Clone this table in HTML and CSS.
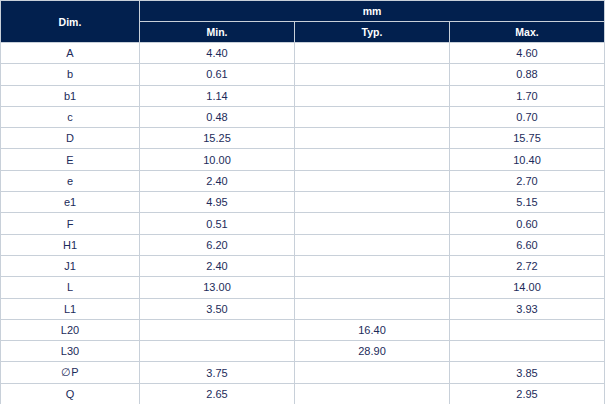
FILE: index.html
```html
<!DOCTYPE html>
<html>
<head>
<meta charset="utf-8">
<link rel="stylesheet" href="styles.css">
</head>
<body>
<table class="dims">
  <colgroup>
    <col class="c-dim"><col class="c-val"><col class="c-val"><col class="c-val">
  </colgroup>
  <thead>
    <tr class="hrow"><th rowspan="2" class="h">Dim.</th><th colspan="3" class="h">mm</th></tr>
    <tr class="hrow"><th class="h">Min.</th><th class="h">Typ.</th><th class="h">Max.</th></tr>
  </thead>
  <tbody>
    <tr><td>A</td><td>4.40</td><td></td><td>4.60</td></tr>
    <tr><td>b</td><td>0.61</td><td></td><td>0.88</td></tr>
    <tr><td>b1</td><td>1.14</td><td></td><td>1.70</td></tr>
    <tr><td>c</td><td>0.48</td><td></td><td>0.70</td></tr>
    <tr><td>D</td><td>15.25</td><td></td><td>15.75</td></tr>
    <tr><td>E</td><td>10.00</td><td></td><td>10.40</td></tr>
    <tr><td>e</td><td>2.40</td><td></td><td>2.70</td></tr>
    <tr><td>e1</td><td>4.95</td><td></td><td>5.15</td></tr>
    <tr><td>F</td><td>0.51</td><td></td><td>0.60</td></tr>
    <tr><td>H1</td><td>6.20</td><td></td><td>6.60</td></tr>
    <tr><td>J1</td><td>2.40</td><td></td><td>2.72</td></tr>
    <tr><td>L</td><td>13.00</td><td></td><td>14.00</td></tr>
    <tr><td>L1</td><td>3.50</td><td></td><td>3.93</td></tr>
    <tr><td>L20</td><td></td><td>16.40</td><td></td></tr>
    <tr><td>L30</td><td></td><td>28.90</td><td></td></tr>
    <tr><td>∅P</td><td>3.75</td><td></td><td>3.85</td></tr>
    <tr><td>Q</td><td>2.65</td><td></td><td>2.95</td></tr>
  </tbody>
</table>
</body>
</html>
```
FILE: styles.css
```css
html, body {
  margin: 0;
  padding: 0;
  background: #ffffff;
}
.dims {
  border-collapse: collapse;
  table-layout: fixed;
  width: 604px;
  font-family: "Liberation Sans", Arial, sans-serif;
  font-size: 11px;
  color: #1c2b5a;
}
.c-dim { width: 139px; }
.c-val { width: 155px; }
.dims th, .dims td {
  padding: 0;
  text-align: center;
  vertical-align: middle;
  border: 1.5px solid #c8d0d9;
}
.dims td {
  height: 20.3px;
}
.hrow th {
  height: 20px;
}
.h {
  background: #02204e;
  color: #ffffff;
  font-weight: bold;
  font-size: 10.5px;
  border-color: #8c9bb2;
}
```
